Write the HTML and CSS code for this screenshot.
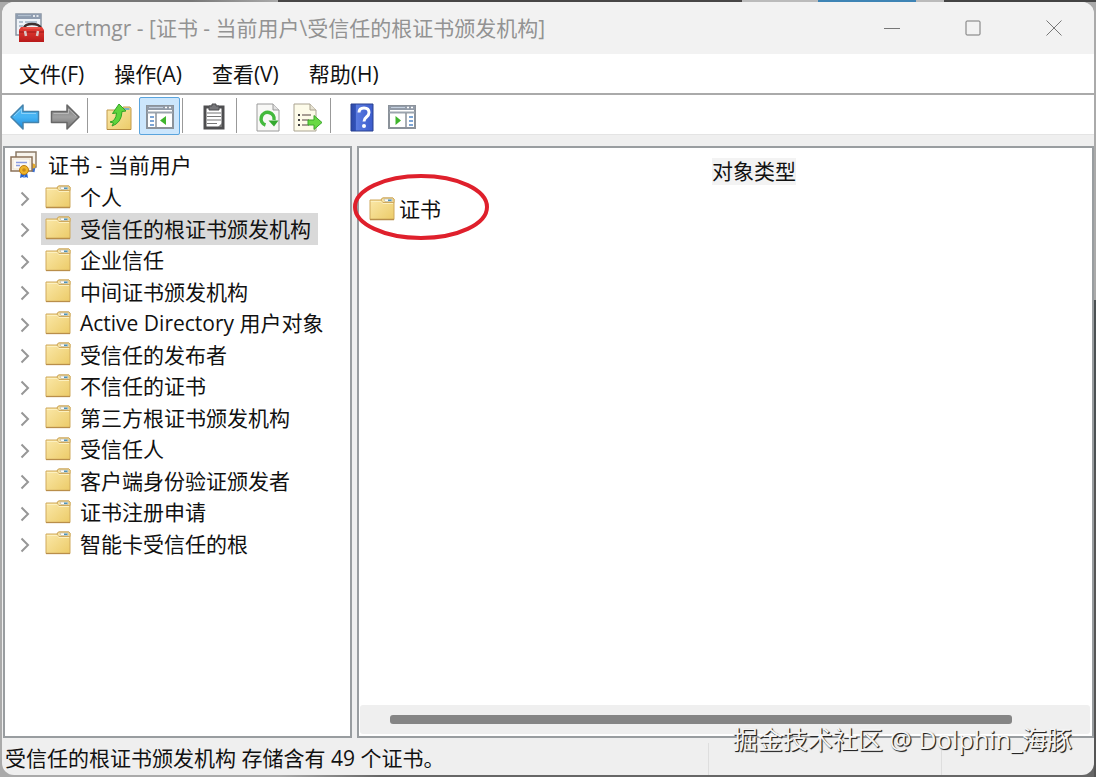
FILE: index.html
```html
<!DOCTYPE html>
<html lang="zh-CN">
<head>
<meta charset="utf-8">
<meta name="viewport" content="width=device-width, initial-scale=1">
<title>certmgr</title>
<link rel="stylesheet" href="styles.css">
</head>
<body>
<svg class="sprite" aria-hidden="true">
  <defs>
    <linearGradient id="g-blue" x1="0" y1="0" x2="0" y2="1"><stop offset="0" stop-color="#4fb4ee"/><stop offset=".5" stop-color="#46b4f4"/><stop offset="1" stop-color="#1a86d8"/></linearGradient>
    <linearGradient id="g-gray" x1="0" y1="0" x2="0" y2="1"><stop offset="0" stop-color="#777"/><stop offset=".5" stop-color="#a0a0a0"/><stop offset="1" stop-color="#707070"/></linearGradient>
    <linearGradient id="g-folder" x1="0" y1="0" x2="1" y2="1"><stop offset="0" stop-color="#fbe9ab"/><stop offset="1" stop-color="#eccb68"/></linearGradient>
    <linearGradient id="g-help" x1="0" y1="0" x2="1" y2="0"><stop offset="0" stop-color="#2f4aa8"/><stop offset=".2" stop-color="#3152b8"/><stop offset=".25" stop-color="#5a7be0"/><stop offset="1" stop-color="#3c5ccc"/></linearGradient>
    <linearGradient id="g-red" x1="0" y1="0" x2="0" y2="1"><stop offset="0" stop-color="#e84038"/><stop offset="1" stop-color="#b81a1a"/></linearGradient>
    <symbol id="i-folder" viewBox="0 0 26 24">
      <path d="M1 3h11l1.500-2H24l1 1v20.500H1z" fill="url(#g-folder)" stroke="#cfa95c"/>
      <path d="M12 3l1.500-2H24l1 1v3.500H13.500z" fill="#f6e2a2" stroke="#cfa95c"/><path d="M15 2h8v2.500h-7z" fill="#fff" stroke="#b5b09a" stroke-width=".6"/><path d="M19 2.500h3.500V4H19z" fill="#4c93b8"/>
      <path d="M1.800 4.500h10.500l1.500 2H24" fill="none" stroke="#fcf0c0"/><path d="M1 22.500h24" stroke="#b98e4a" stroke-width="1.300"/>
    </symbol>
    <symbol id="i-app" viewBox="0 0 30 30">
      <path d="M1 1h25v21H1z" fill="#eef3f8" stroke="#8a95a2" stroke-width="1.500"/><path d="M1 1h25v5H1z" fill="#8f9db0"/><path d="M3 2.600h13" stroke="#b7c4d2"/><path d="M18 3h2m1.500 0h2" stroke="#fff" stroke-width="1.500"/>
      <path d="M4 9h4m2 0h12M4 13h4m-4 4h4" stroke="#9fb2c4" stroke-width="1.500"/>
      <path d="M9 15q1-4 8-4t9 4" fill="none" stroke="#3d3030" stroke-width="2.500"/>
      <path d="M6 14h21l2 3v12H4V17z" fill="url(#g-red)"/><path d="M4 19h25" stroke="#9b1818"/><path d="M8 15h17" stroke="#f26a60"/>
      <path d="M10 18l1 5m12-5l-1 5" stroke="#d9c8c8" stroke-width="2.500"/>
    </symbol>
    <symbol id="i-cert" viewBox="0 0 28 28">
      <path d="M6 1h20v15H6z" fill="#f8f4ec" stroke="#8c7b68" stroke-width="1.500"/>
      <path d="M21 13l3 3-1 5" stroke="#3c70d0" stroke-width="3" fill="none"/><circle cx="23" cy="15" r="2.500" fill="#e5ab2b"/>
      <path d="M1 6h21v14H1z" fill="#fdfaf4" stroke="#8c7258" stroke-width="1.500"/><path d="M3 8h17v10H3z" fill="none" stroke="#e8dcc8" stroke-width=".8"/>
      <path d="M6 11.500h11m-11 3h4" stroke="#8b9ce0" stroke-width="1.300"/>
      <path d="M11 21l-1 6 2.500-1 1 1 1-5zm6 0l1 6-2-1-1.500 1-.5-5z" fill="#2462cf"/>
      <circle cx="14" cy="19" r="4.500" fill="#efb52a" stroke="#bc7c13"/><circle cx="14" cy="19" r="1.800" fill="#c98b19"/>
    </symbol>
    <symbol id="i-back" viewBox="0 0 30 26"><path d="M1 13L13 1v6.500h15.500v11H13V25z" fill="url(#g-blue)" stroke="#4583ac" stroke-width="1.500" stroke-linejoin="round"/><path d="M4 12L11.500 5v4.500H26" fill="none" stroke="#8cd2fa"/></symbol>
    <symbol id="i-next" viewBox="0 0 30 26"><path d="M29 13L17 1v6.500H1.500v11H17V25z" fill="url(#g-gray)" stroke="#686868" stroke-width="1.500" stroke-linejoin="round"/><path d="M3.500 9.500h15V5l7.500 7" fill="none" stroke="#b9b9b9"/></symbol>
    <symbol id="i-up" viewBox="0 0 28 28">
      <path d="M2 7h14l2-3h7l1 1.500V26.500H2z" fill="url(#g-folder)" stroke="#c29a4c"/><path d="M18.500 5h6v2h-6z" fill="#7fb0c2"/><path d="M2 26.500h24" stroke="#b4893f"/>
      <path d="M5 19q6-1 6.500-9l-4 .5L14 1l7 7-4 .5Q16.500 20 7 23l1.500-3z" fill="#5ed43c" stroke="#31a326" stroke-linejoin="round"/>
    </symbol>
    <symbol id="i-left-pane" viewBox="0 0 28 24">
      <path d="M1 1h26v22H1z" fill="#fff" stroke="#8b929a" stroke-width="2"/><path d="M1 1h26v4H1z" fill="#929ba8"/><path d="M3 2.500h14" stroke="#c4d0df"/><path d="M19 2.500h2m2 0h2" stroke="#fff" stroke-width="1.500"/><path d="M1 7.500h26" stroke="#9ba4ae" stroke-width="2"/>
      <path d="M10 8v15" stroke="#8b929a" stroke-width="1.500"/><path d="M4 12h4m-4 4h4m-4 4h4" stroke="#5288c8" stroke-width="1.600"/><path d="M20 11v9l-6-4.500z" fill="#3fb52c"/>
    </symbol>
    <symbol id="i-right-pane" viewBox="0 0 28 24">
      <path d="M1 1h26v22H1z" fill="#fff" stroke="#8b929a" stroke-width="2"/><path d="M1 1h26v4H1z" fill="#929ba8"/><path d="M3 2.500h14" stroke="#c4d0df"/><path d="M19 2.500h2m2 0h2" stroke="#fff" stroke-width="1.500"/><path d="M1 7.500h26" stroke="#9ba4ae" stroke-width="2"/>
      <path d="M18 8v15" stroke="#8b929a" stroke-width="1.500"/><path d="M21 12h4m-4 4h4m-4 4h4" stroke="#5288c8" stroke-width="1.600"/><path d="M7.500 11v9l5.500-4.500z" fill="#3fb52c"/>
    </symbol>
    <symbol id="i-clip" viewBox="0 0 24 28"><path d="M3 4h18v21H3z" fill="#fff" stroke="#4e4e50" stroke-width="3"/><path d="M7 3h3V1h4v2h3v4H7z" fill="#77777a" stroke="#4e4e50"/><path d="M5 10h14M5 13.500h14M5 17h14M5 20.500h10" stroke="#777" stroke-width="1.200"/><path d="M16 24l4-4v4z" fill="#777"/></symbol>
    <symbol id="i-refresh" viewBox="0 0 24 29"><path d="M1 1h16l6 6v21H1z" fill="#f8f8f6" stroke="#9a9a9a"/><path d="M17 1v6h6" fill="#e2e2e2" stroke="#9a9a9a"/><path d="M9.500 22A6.500 6.500 0 1 1 18 17" fill="none" stroke="#43b93c" stroke-width="3.500"/><path d="M12.500 17.500h10L18 23.500z" fill="#34a92e"/></symbol>
    <symbol id="i-export" viewBox="0 0 30 29"><path d="M1 1h16l6 6v21H1z" fill="#fdfbe9" stroke="#aaa391"/><path d="M17 1v6h6" fill="#e7e3d3" stroke="#aaa391"/><path d="M5 12h2m-2 5h2m-2 5h2" stroke="#444" stroke-width="2"/><path d="M9 12h9m-9 5h7m-7 5h7" stroke="#8a7f78" stroke-width="1.500"/><path d="M15 17h6v-4.500l8 7-8 7V22h-6z" fill="#68d943" stroke="#3aa62b"/></symbol>
    <symbol id="i-help" viewBox="0 0 24 29"><path d="M1 1h22v27H1z" fill="url(#g-help)" stroke="#28408f"/><path d="M9 9.500Q9 5 14 5t5 4.500q0 2.500-2.500 4.500T14 18.500" fill="none" stroke="#fff" stroke-width="3"/><circle cx="14" cy="23" r="2" fill="#fff"/></symbol>
    <symbol id="i-chevron" viewBox="0 0 10 16"><path d="M1.500 1.500L8 8l-6.500 6.500" fill="none" stroke="#979797" stroke-width="2"/></symbol>
  </defs>
</svg>

<main class="window">
  <header class="titlebar">
    <svg class="app-icon"><use href="#i-app"/></svg>
    <h1 class="title">certmgr - [证书 - 当前用户\受信任的根证书颁发机构]</h1>
    <div class="controls">
      <button class="control" aria-label="最小化"><svg class="control-icon" viewBox="0 0 16 16"><path d="M0 8.500h16"/></svg></button>
      <button class="control" aria-label="最大化"><svg class="control-icon" viewBox="0 0 16 16"><rect x="1" y="1" width="14" height="14" rx="1"/></svg></button>
      <button class="control" aria-label="关闭"><svg class="control-icon" viewBox="0 0 16 16"><path d="M.5.5l15 15m0-15l-15 15"/></svg></button>
    </div>
  </header>
  <nav class="menubar">
    <button class="menu">文件(F)</button>
    <button class="menu">操作(A)</button>
    <button class="menu">查看(V)</button>
    <button class="menu">帮助(H)</button>
  </nav>
  <div class="toolbar" role="toolbar">
    <button class="tool" aria-label="后退"><svg width="30" height="26"><use href="#i-back"/></svg></button>
    <button class="tool" aria-label="前进"><svg width="30" height="26"><use href="#i-next"/></svg></button>
    <span class="divider"></span>
    <button class="tool" aria-label="向上一级"><svg width="28" height="28"><use href="#i-up"/></svg></button>
    <button class="tool tool-on" aria-label="显示控制台树" aria-pressed="true"><svg width="28" height="24"><use href="#i-left-pane"/></svg></button>
    <span class="divider"></span>
    <button class="tool" aria-label="粘贴"><svg width="24" height="28"><use href="#i-clip"/></svg></button>
    <span class="divider"></span>
    <button class="tool" aria-label="刷新"><svg width="24" height="29"><use href="#i-refresh"/></svg></button>
    <button class="tool" aria-label="导出列表"><svg width="30" height="29"><use href="#i-export"/></svg></button>
    <span class="divider"></span>
    <button class="tool" aria-label="帮助"><svg width="24" height="29"><use href="#i-help"/></svg></button>
    <button class="tool" aria-label="显示操作窗格"><svg width="28" height="24"><use href="#i-right-pane"/></svg></button>
  </div>
  <div class="panes">
    <section class="pane tree-pane">
      <div class="root"><svg class="root-icon"><use href="#i-cert"/></svg>证书 - 当前用户</div>
      <ul class="tree">
        <li class="node"><button class="expander" aria-label="展开"><svg width="10" height="16"><use href="#i-chevron"/></svg></button><span class="label"><svg class="folder"><use href="#i-folder"/></svg>个人</span></li>
        <li class="node"><button class="expander" aria-label="展开"><svg width="10" height="16"><use href="#i-chevron"/></svg></button><span class="label selected"><svg class="folder"><use href="#i-folder"/></svg>受信任的根证书颁发机构</span></li>
        <li class="node"><button class="expander" aria-label="展开"><svg width="10" height="16"><use href="#i-chevron"/></svg></button><span class="label"><svg class="folder"><use href="#i-folder"/></svg>企业信任</span></li>
        <li class="node"><button class="expander" aria-label="展开"><svg width="10" height="16"><use href="#i-chevron"/></svg></button><span class="label"><svg class="folder"><use href="#i-folder"/></svg>中间证书颁发机构</span></li>
        <li class="node"><button class="expander" aria-label="展开"><svg width="10" height="16"><use href="#i-chevron"/></svg></button><span class="label"><svg class="folder"><use href="#i-folder"/></svg>Active Directory 用户对象</span></li>
        <li class="node"><button class="expander" aria-label="展开"><svg width="10" height="16"><use href="#i-chevron"/></svg></button><span class="label"><svg class="folder"><use href="#i-folder"/></svg>受信任的发布者</span></li>
        <li class="node"><button class="expander" aria-label="展开"><svg width="10" height="16"><use href="#i-chevron"/></svg></button><span class="label"><svg class="folder"><use href="#i-folder"/></svg>不信任的证书</span></li>
        <li class="node"><button class="expander" aria-label="展开"><svg width="10" height="16"><use href="#i-chevron"/></svg></button><span class="label"><svg class="folder"><use href="#i-folder"/></svg>第三方根证书颁发机构</span></li>
        <li class="node"><button class="expander" aria-label="展开"><svg width="10" height="16"><use href="#i-chevron"/></svg></button><span class="label"><svg class="folder"><use href="#i-folder"/></svg>受信任人</span></li>
        <li class="node"><button class="expander" aria-label="展开"><svg width="10" height="16"><use href="#i-chevron"/></svg></button><span class="label"><svg class="folder"><use href="#i-folder"/></svg>客户端身份验证颁发者</span></li>
        <li class="node"><button class="expander" aria-label="展开"><svg width="10" height="16"><use href="#i-chevron"/></svg></button><span class="label"><svg class="folder"><use href="#i-folder"/></svg>证书注册申请</span></li>
        <li class="node"><button class="expander" aria-label="展开"><svg width="10" height="16"><use href="#i-chevron"/></svg></button><span class="label"><svg class="folder"><use href="#i-folder"/></svg>智能卡受信任的根</span></li>
      </ul>
    </section>
    <section class="pane list-pane">
      <div class="column-head"><span class="column-name">对象类型</span></div>
      <div class="entry"><svg class="folder"><use href="#i-folder"/></svg>证书<svg class="ring" viewBox="0 0 136 66"><ellipse cx="68" cy="33" rx="66" ry="31"/></svg></div>
      <div class="scroll-track"><div class="scroll-thumb"></div></div>
    </section>
  </div>
  <footer class="status">
    <span class="status-text">受信任的根证书颁发机构 存储含有 49 个证书。</span>
    <span class="status-cell"></span>
    <span class="status-cell status-last"></span>
  </footer>
</main>
<div class="watermark">掘金技术社区 @ Dolphin_海豚</div>
</body>
</html>
```
FILE: styles.css
```css
* {
  box-sizing: border-box;
}

body {
  margin: 0;
  min-height: 100vh;
  padding: 2px;
  display: flex;
  color: #111;
  font: 21px/31px "Open Sans", "Noto Sans CJK SC", sans-serif;
  background:
    linear-gradient(90deg, #777 0 190px, #aaa 278px, #484646 278px 742px, #bbb 742px 818px, #3e84b5 818px 916px, #bbb 916px 944px, #444 944px) top / 100% 2px no-repeat,
    linear-gradient(#aaa 0 300px, #4b5052 300px 470px, #555 470px) right / 2px 100% no-repeat,
    linear-gradient(90deg, #aaa 0 280px, #666 380px) bottom / 100% 12px no-repeat,
    #aaa;
}

button {
  border: 0;
  padding: 0;
  background: none;
  color: inherit;
  font: inherit;
}

svg {
  display: block;
  flex: none;
}

.sprite {
  position: absolute;
  width: 0;
  height: 0;
}

.window {
  flex: 1;
  min-width: 0;
  display: flex;
  flex-direction: column;
  border-radius: 12px;
  overflow: hidden;
  background: #efefef;
}

.titlebar {
  display: flex;
  align-items: center;
  height: 52px;
  padding-left: 13px;
  background: #f2f2f2;
}

.app-icon {
  width: 30px;
  height: 30px;
}

.title {
  flex: 1;
  margin: 0 0 0 9px;
  color: #939393;
  font-size: 21px;
  font-weight: 400;
  white-space: nowrap;
}

.controls {
  display: flex;
}

.control {
  display: grid;
  place-items: center;
  width: 81px;
  height: 50px;
}

.control-icon {
  width: 16px;
  height: 16px;
  fill: none;
  stroke: #777;
  stroke-width: 1;
}

.menubar {
  display: flex;
  gap: 30px;
  height: 41px;
  padding: 5px 17px 3px;
  border-bottom: 2px solid #aaa;
  background: #fff;
}

.toolbar {
  display: flex;
  height: 40px;
  padding: 2px 3px 0;
  border-bottom: 1px solid #e4e4e4;
  background: #fff;
}

.tool {
  display: grid;
  place-items: center;
  width: 40px;
  height: 38px;
  padding-top: 2px;
}

.tool-on {
  width: 41px;
  border: 1px solid #5aa4dd;
  border-radius: 2px;
  background: #cce6fc;
}

.divider {
  width: 1px;
  height: 35px;
  margin: 1px 11px 0 2px;
  background: #999;
}

.panes {
  flex: 1;
  display: flex;
  gap: 5px;
  padding: 11px 0 0 1px;
}

.pane {
  border: 2px solid #999da0;
  background: #fff;
}

.tree-pane {
  width: 349px;
}

.root {
  display: flex;
  align-items: center;
  gap: 10px;
  height: 34px;
  padding-left: 5px;
}

.root-icon {
  width: 28px;
  height: 28px;
}

.tree {
  margin: 0;
  padding: 0;
  list-style: none;
}

.node {
  display: flex;
  height: 31px;
}

.node:nth-child(even) {
  height: 32px;
}

.expander {
  display: grid;
  place-items: center;
  width: 36px;
  padding: 2px 0 0 4px;
}

.label {
  display: flex;
  align-items: center;
  gap: 9px;
  padding: 0 7px 0 4px;
  white-space: nowrap;
}

.selected {
  background: #d9d9d9;
}

.folder {
  width: 26px;
  height: 24px;
  margin-bottom: 2px;
}

.list-pane {
  flex: 1;
  display: flex;
  flex-direction: column;
}

.column-head {
  display: flex;
  justify-content: center;
  padding: 10px 0 0 57px;
}

.column-name {
  height: 27px;
  line-height: 27px;
  background: #f3f3f3;
}

.entry {
  position: relative;
  display: flex;
  align-items: center;
  align-self: flex-start;
  gap: 4px;
  padding: 9px 0 0 10px;
}

/* Annotation drawn over the pane border and the entry. */
.ring {
  position: absolute;
  left: -6px;
  top: -11px;
  width: 136px;
  height: 66px;
  fill: none;
  stroke: #df202c;
  stroke-width: 4;
}

.scroll-track {
  height: 29px;
  margin: auto 2px 2px 1px;
  padding: 10px 78px 10px 30px;
  border-radius: 3px;
  background: #efefef;
}

.scroll-thumb {
  height: 9px;
  border-radius: 3px;
  background: #858585;
}

.status {
  display: flex;
  height: 37px;
  padding: 5px 0 0 3px;
}

.status-text {
  flex: 1;
  white-space: nowrap;
}

.status-cell {
  width: 233px;
  border-left: 1px solid #dedede;
}

.status-last {
  width: 153px;
}

.watermark {
  position: absolute;
  right: 24px;
  bottom: 21px;
  color: #f4f4f4;
  font: 25px/34px "Noto Sans", "Noto Sans CJK SC", sans-serif;
  text-shadow: 1px 1px 1px #222, 1px 1px 0 #444;
}
```
